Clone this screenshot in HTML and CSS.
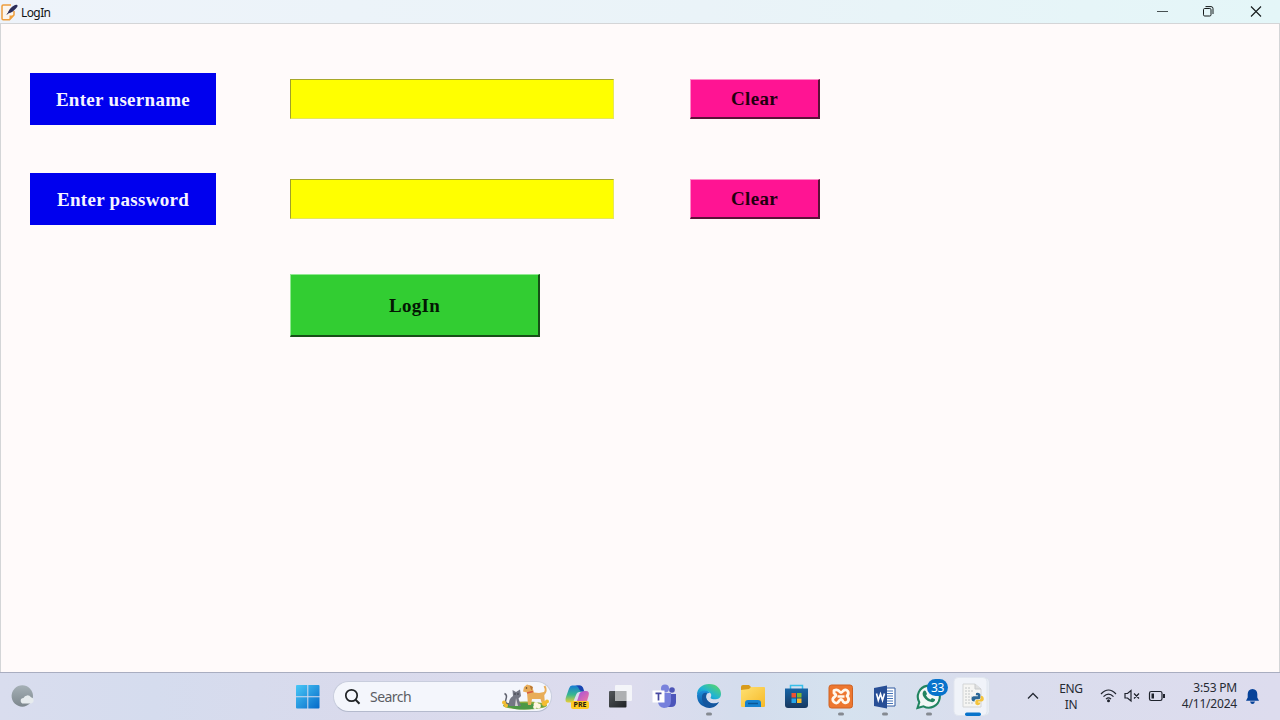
FILE: index.html
```html
<!DOCTYPE html>
<html lang="en">
<head>
<meta charset="utf-8">
<title>LogIn</title>
<link rel="stylesheet" href="styles.css">
</head>
<body>
<div class="desktop">
  <header class="titlebar">
    <svg class="app-icon" width="18" height="20" viewBox="0 0 18 20">
      <path d="M11 4H3.2Q2 4 2 5.200V17.500Q2 18.800 3.200 18.800H9.500L14 14V10" fill="#fbf5ee" stroke="#ee9d3c" stroke-width="1.500"/>
      <path d="M9.500 19V14.500H14Z" fill="#f2a13b"/>
      <path d="M7 13.500L9.500 10" stroke="#30304e" stroke-width="1"/>
      <path d="M8 12.500Q8.500 7.500 15 4Q18.500 3 17.200 6Q13 11.500 8 12.500Z" fill="#2b2d5b"/>
    </svg>
    <span class="title">LogIn</span>
    <svg class="window-controls" width="140" height="23" viewBox="0 0 140 23" fill="none" stroke="#151a1b">
      <path d="M17 11.500H28" stroke="#475052"/>
      <rect x="63.500" y="8.500" width="7.500" height="7.500" rx="1.200"/>
      <path d="M65.500 6.600H71Q73 6.600 73 8.600V14"/>
      <path d="M111 6.500L121 16.500M121 6.500L111 16.500" stroke-width="1.100"/>
    </svg>
  </header>

  <main class="window">
    <form class="login-form">
      <label class="field-label" for="user">Enter username</label>
      <input class="entry" id="user" type="text">
      <button class="button clear" type="button">Clear</button>
      <label class="field-label" for="pass">Enter password</label>
      <input class="entry" id="pass" type="password">
      <button class="button clear" type="button">Clear</button>
      <button class="button submit" type="button">LogIn</button>
    </form>
  </main>

  <footer class="taskbar">
    <svg class="weather" width="44" height="47" viewBox="0 0 44 47">
      <defs>
        <linearGradient id="moon" x2="0" y2="1"><stop stop-color="#a5b0b6"/><stop offset="1" stop-color="#7d878d"/></linearGradient>
      </defs>
      <circle cx="22.300" cy="23" r="10.700" fill="url(#moon)"/>
      <path d="M23.500 30.500a2.800 2.800 0 0 1 0-5.600a4.300 4.300 0 0 1 7.500-.6a3.200 3.200 0 0 1 .5 6.200Z" fill="#e7ecee"/>
    </svg>

    <svg class="start" width="38" height="47" viewBox="0 0 38 47">
      <defs>
        <linearGradient id="win" x2="1" y2="1"><stop stop-color="#49c8f7"/><stop offset="1" stop-color="#0669c8"/></linearGradient>
      </defs>
      <path d="M11 12H21.300V23.200H10V13Q10 12 11 12ZM22.300 12H32.500Q33.500 12 33.500 13V23.200H22.300ZM10 24.200H21.300V35.500H11Q10 35.500 10 34.500ZM22.300 24.200H33.500V34.500Q33.500 35.500 32.500 35.500H22.300Z" fill="url(#win)"/>
    </svg>

    <div class="search">
      <svg width="18" height="18" viewBox="0 0 18 18" fill="none" stroke="#202326" stroke-width="1.700">
        <circle cx="7.500" cy="7.500" r="5.700"/><path d="M11.600 11.800L15.500 15.700" stroke-width="2"/>
      </svg>
      <span class="search-text">Search</span>
      <svg class="pets" width="50" height="29" viewBox="0 0 50 29">
        <ellipse cx="24" cy="23.500" rx="22" ry="4" fill="#8dac3c"/>
        <path d="M3 24Q20 18 43 24Q30 29 14 27Z" fill="#4d9846"/>
        <path d="M9 22Q3 22 5 17Q6.500 13 3.500 11.500" fill="none" stroke="#5e616d" stroke-width="1.500"/>
        <path d="M8 24Q7 17 12 14L11.500 8L15 10L19 7.500L20 14L17.500 16.500L20 24Z" fill="#747784"/>
        <path d="M15 16L17 24H14Z" fill="#d5d1d5"/>
        <circle cx="14" cy="12" r=".7" fill="#292b34"/><circle cx="17" cy="12" r=".7" fill="#292b34"/>
        <path d="M23 5L26 2.500L31 4L33 10.500L38 11L43 10L44 22H41L39.500 17L31 17L30 23H27L26 10.500L22 9.500Z" fill="#e8ad59"/>
        <path d="M42 13Q46.500 9 43.500 4" fill="none" stroke="#e8ad59" stroke-width="2"/>
        <path d="M28.500 3.500L32 5L30.500 8.500Z" fill="#b97735"/><circle cx="25.500" cy="6" r=".8" fill="#483522"/>
        <path d="M26 11L32 9.500" stroke="#d65b43" stroke-width="1.400"/>
        <g fill="#f5bd30"><circle cx="3" cy="20.500" r="2"/><circle cx="5" cy="23.500" r="2"/><circle cx="43.500" cy="21.500" r="2.500"/><circle cx="46" cy="19.500" r="2"/></g>
        <g fill="#fff6df"><circle cx="35" cy="22.500" r="2.400"/><circle cx="37.500" cy="24" r="2.400"/><circle cx="34" cy="25" r="1.900"/></g>
      </svg>
    </div>

    <nav class="apps">
      <div class="app">
        <svg width="44" height="47" viewBox="0 0 44 47">
          <defs>
            <linearGradient id="cpa" x2="0" y2="1"><stop stop-color="#177bd5"/><stop offset=".55" stop-color="#39b88f"/><stop offset="1" stop-color="#edcf32"/></linearGradient>
            <linearGradient id="cpb" x2="1" y2="1"><stop stop-color="#954de8"/><stop offset="1" stop-color="#ff7c91"/></linearGradient>
          </defs>
          <path d="M17 12.500H24Q27 12.500 28 16.500L29 19H24.500Q22 19 21 22L19 27Q18.500 29.500 16 29.500H14Q9 30 11 24L14 15.500Q15 12.500 17 12.500Z" fill="url(#cpa)"/>
          <path d="M29 18H31Q35 18 33.500 23L32 28Q31 32 27 32H19Q21 31 22 28L24 22Q25 18 29 18Z" fill="url(#cpb)"/>
          <path d="M20 12.500H25Q27.500 12.500 28.500 16L29 18Q25 19 24 16Q23 12.500 20 12.500Z" fill="#1945b2"/>
        </svg>
        <span class="pre">PRE</span>
      </div>
      <svg class="app" viewBox="0 0 44 47">
        <defs><linearGradient id="tv" x2="1" y2="1"><stop stop-color="#53575b"/><stop offset="1" stop-color="#1e2124"/></linearGradient></defs>
        <rect x="10" y="18" width="17.500" height="16.500" rx="1" fill="url(#tv)"/>
        <rect x="16" y="12" width="17" height="16" rx="1" fill="#f7f8fa" opacity=".88"/>
        <path d="M16 18H27.500V28H16Z" fill="#aeb0b2"/>
      </svg>
      <svg class="app" viewBox="0 0 44 47">
        <circle cx="22" cy="15.500" r="4" fill="#7982dc"/><circle cx="29" cy="17" r="2.800" fill="#4d55b6"/>
        <path d="M25 21H33V29Q33 34 28 34H25Z" fill="#4c55ba"/>
        <path d="M16 20H28V28Q28 35 21 35Q15 34 15 28Z" fill="#7680dc"/>
        <rect x="9.500" y="17.500" width="12" height="12" fill="#fff"/>
        <path d="M12.500 20.300H18.500M15.500 20.300V27.500" stroke="#4648a1" stroke-width="1.700"/>
      </svg>
      <svg class="app" viewBox="0 0 44 47">
        <defs>
          <linearGradient id="edge" y1="1" x2="1" y2="0"><stop stop-color="#0878c8"/><stop offset=".45" stop-color="#20b3d5"/><stop offset="1" stop-color="#61dc58"/></linearGradient>
          <linearGradient id="edge2" x2="0" y2="1"><stop stop-color="#1c90dc"/><stop offset="1" stop-color="#0c4f9b"/></linearGradient>
        </defs>
        <path d="M10 22C10 15 15.500 11 22 11C30 11 34 16 34 21C34 26 29 27 25 26C22 25 25 24 24 21C22 17 13 17 10 22Z" fill="url(#edge)"/>
        <path d="M10 22C12 17 20 16 23 20C18 19 18 26 22 29C25 31 30 31 32 29C28 36 21 36 16 33C12 31 10 27 10 22Z" fill="url(#edge2)"/>
        <path d="M15 23Q16 19 20 20Q17 25 22 29Q26 32 32 29Q27 36 20 34Q14 30 15 23Z" fill="#14569e"/>
        <rect class="dot" x="19" y="39.500" width="6" height="3" rx="1.500"/>
      </svg>
      <svg class="app" viewBox="0 0 44 47">
        <defs><linearGradient id="folder" x2="1" y2="1"><stop stop-color="#ffe172"/><stop offset="1" stop-color="#f6b928"/></linearGradient></defs>
        <path d="M10 14Q10 12 12 12H18L20 14V17H10Z" fill="#d89b1b"/>
        <path d="M10 17L18 16L20 14H33Q34 14 34 15V33Q34 34 33 34H11Q10 34 10 33Z" fill="url(#folder)"/>
        <path d="M14 34V30Q14 27 17 27H27Q30 27 30 30V34Z" fill="#1682d0"/><path d="M17 30.500H27" stroke="#0a5796" stroke-width="1.500"/>
      </svg>
      <svg class="app" viewBox="0 0 44 47">
        <defs><linearGradient id="store" x2="0" y2="1"><stop stop-color="#1765a7"/><stop offset="1" stop-color="#17385f"/></linearGradient></defs>
        <path d="M15.500 17V12.500H27.500V17" fill="none" stroke="#37bfe9" stroke-width="1.500"/>
        <path d="M10 15.500H33V32Q33 35 30 35H13Q10 35 10 32Z" fill="url(#store)"/>
        <path d="M16.500 20H21V24.500H16.500Z" fill="#f05233"/><path d="M22 20H26.500V24.500H22Z" fill="#7eba32"/><path d="M16.500 25.500H21V30H16.500Z" fill="#26a6e9"/><path d="M22 25.500H26.500V30H22Z" fill="#fcbc27"/>
      </svg>
      <svg class="app" viewBox="0 0 44 47">
        <rect x="10" y="12" width="23.500" height="23" rx="2.500" fill="#ed772f" stroke="#cd6325"/>
        <path d="M15 17.500Q18 16 20 18Q22 21 24 18Q27 15.500 29 18.500Q30 21 28 23Q31 26 28.500 29Q25 31 23.500 27.500Q22 25 20 28Q18 31.500 15 29Q12 26 16 23.500Q18 22 15 20Z" fill="none" stroke="#fff8ec" stroke-width="2.800" stroke-linejoin="round"/>
        <path d="M18.500 23.500H25.500" stroke="#fff8ec" stroke-width="2.500"/>
        <rect class="dot" x="19" y="39.500" width="6" height="3" rx="1.500"/>
      </svg>
      <svg class="app" viewBox="0 0 44 47">
        <path d="M22 15H32V33H22Z" fill="#fff" stroke="#315aa0" stroke-width="1"/>
        <path d="M24 18H30M24 20.500H30M24 23H30M24 25.500H30M24 28H30M24 30.500H30" stroke="#4775b9" stroke-width="1"/>
        <path d="M11 15L24 12.500V35.500L11 33Z" fill="#284f96"/>
        <path d="M13.500 20.500L15.300 27.300L17.500 21L19.500 27.300L21.500 20.500" fill="none" stroke="#fff" stroke-width="1.600"/>
        <rect class="dot" x="19" y="39.500" width="6" height="3" rx="1.500"/>
      </svg>
      <div class="app">
        <svg width="44" height="47" viewBox="0 0 44 47">
          <path d="M10.500 35L12.300 29.200A11 11 0 1 1 16.500 33.300Z" fill="#f2f7f6" stroke="#218460" stroke-width="2.100"/>
          <path d="M16 19Q17.500 16.500 19 18.500L20 21L19 22.500Q20.500 25.300 23.500 26.500L25 25L28 26.300Q28.500 28.500 25.500 29.300Q21.500 29.500 18.300 26Q14.500 22 16 19Z" fill="#218460"/>
          <rect class="dot" x="19" y="39.500" width="6" height="3" rx="1.500"/>
        </svg>
        <span class="badge">33</span>
      </div>
      <svg class="app" viewBox="0 0 44 47">
        <rect x="6" y="5" width="32.500" height="37.500" rx="4" fill="#e7ecf5" stroke="#d9dfe9"/>
        <rect x="3" y="4.500" width="33" height="38" rx="4" fill="#f0f3f9" stroke="#e1e6ef"/>
        <path d="M12 11H24L30 16V34H12Z" fill="#f5f5f3" stroke="#d3d5d6"/>
        <path d="M24 11V16H30" fill="#dedfdf" stroke="#c9cbcc"/>
        <path d="M14 15H19M14 18H22M14 21H20M14 24H21M14 27H19M14 30H22" stroke="#c2c6c7" stroke-dasharray="2 1"/>
        <g transform="translate(5 2.500) scale(.84 .9)">
          <path d="M24 19.500Q28 18.500 29 21V25Q28.500 26.500 26.500 26.500H23.500Q22 27 22 29Q18 29 18.500 25Q19 23 21 23H26V22H23.500Z" fill="#2c6796"/>
          <path d="M29.500 22.500Q33.500 22.500 33 27Q32.500 29 30.500 29H26.500V30H29Q29 33 25.500 33Q22.500 32.500 23 30V28.500Q23.500 27 25.500 27H28Q29.500 26.500 29.500 25Z" fill="#f4c43d"/>
        </g>
        <rect x="14" y="39.500" width="16" height="3.500" rx="1.700" fill="#0873cb"/>
      </svg>
    </nav>

    <div class="tray">
      <svg class="chevron" width="14" height="10" viewBox="0 0 14 10" fill="none" stroke="#252a34" stroke-width="1.300"><path d="M2 6.500L7 1.500L12 6.500"/></svg>
      <div class="language"><span>ENG</span><span>IN</span></div>
      <svg class="status" width="70" height="18" viewBox="0 0 70 18" fill="none" stroke="#1e222c" stroke-width="1.200">
        <path d="M1 6Q8.500-2 16 6M3.500 8.700Q8.500 3.500 13.500 8.700M6 11.200Q8.500 8.700 11 11.200"/>
        <circle cx="8.500" cy="12.700" r="1.500" fill="#1e222c" stroke="none"/>
        <path d="M25 5.500H27.500L31 2.500V13L27.500 10H25ZM34 5.500L39 10.500M39 5.500L34 10.500"/>
        <rect x="49.500" y="3.500" width="12.500" height="9" rx="1.700"/><path d="M51.500 5.500H54V10.500H51.500Z" fill="#1e222c" stroke="none"/><path d="M64 6V10" stroke-width="2"/>
      </svg>
      <div class="clock"><span class="time">3:53 PM</span><span>4/11/2024</span></div>
      <svg class="bell" width="15" height="17" viewBox="0 0 15 17" fill="#064299"><path d="M7.500 1Q12.200 1.300 12.300 6V9.500L14 12.800H1L2.700 9.500V6Q2.800 1.300 7.500 1ZM5 13.500H10Q9.300 16 7.500 16T5 13.500Z"/></svg>
    </div>
  </footer>
</div>
</body>
</html>
```

FILE: styles.css
```css
* { box-sizing: border-box; }
body { margin: 0; overflow: hidden; }
svg { display: block; flex: none; }

.desktop {
  width: 1280px;
  height: 720px;
  display: flex;
  flex-direction: column;
  font-family: "Noto Sans", "Open Sans", sans-serif;
}

.titlebar {
  height: 23px;
  display: flex;
  align-items: center;
  background: linear-gradient(90deg, #eef3fa, #eaf3f8 55%, #e4f6f8);
  color: #101214;
  font-size: 12px;
}
.app-icon { margin-top: -2px; }
.title { margin-left: 3px; line-height: 23px; padding-top: 1px; letter-spacing: -.6px; }
.window-controls { margin-left: auto; }

.window {
  height: 649px;
  padding: 49px 0 0 29px;
  background: #fffafa;
  border: 1px solid #d4d5d7;
  border-bottom: 0;
}
.login-form {
  display: grid;
  grid-template-columns: 260px 400px 130px;
  grid-template-rows: 52px 52px 63px;
  row-gap: 48px;
  align-items: start;
  font-family: "Liberation Serif", "Times New Roman", serif;
  font-weight: bold;
  font-size: 19px;
}
.field-label {
  width: 186px;
  height: 52px;
  padding-top: 1px;
  line-height: 52px;
  background: #0000ee;
  color: #f5f4ff;
  text-align: center;
  letter-spacing: .3px;
}
.entry {
  width: 324px;
  height: 40px;
  padding: 0 8px;
  margin: 6px 0 0;
  background: #ffff00;
  border: 1px solid;
  border-color: #a8a828 #e6e65e #e6e65e #a0a02a;
  border-radius: 0;
  outline: 0;
  font: inherit;
}
.button {
  border-style: solid;
  border-width: 1px 2px 2px 1px;
  border-radius: 0;
  padding: 0;
  font: inherit;
  letter-spacing: .3px;
  color: #000;
}
.clear {
  width: 130px;
  height: 40px;
  margin: 6px 0 0;
  background: #ff1493;
  border-color: #ff8cca #5c1038 #5c1038 #ff8cca;
  color: #21000f;
}
.submit {
  grid-column: 2;
  width: 250px;
  height: 63px;
  margin: 1px 0 0;
  padding-top: 2px;
  background: #32cd32;
  border-color: #91e991 #174f17 #174f17 #91e991;
  color: #031703;
}

.taskbar {
  height: 48px;
  display: flex;
  align-items: center;
  border-top: 1px solid #a9adc0;
  background: linear-gradient(90deg, #d9ddee 0, #d5dcee 12%, #d9daec 28%, #dddcee 49%, #d4dded 58%, #d5e2ef 66%, #dadded 77%, #dddcee 100%);
}
.start { margin-left: 242px; }
.search {
  width: 219px;
  height: 31px;
  margin-left: 9px;
  padding-left: 10px;
  display: flex;
  align-items: center;
  border: 1px solid #c8cddd;
  border-bottom-color: #b4bacd;
  border-radius: 16px;
  background: #f4f6fc;
}
.search-text { margin-left: 8px; margin-top: -1px; color: #5b5d63; font-size: 14px; letter-spacing: -.55px; }
.pets { margin-left: auto; }
.apps { display: flex; margin-left: 3px; }
.app { position: relative; width: 44px; height: 47px; }
.dot { fill: #858a91; }
.pre {
  position: absolute;
  left: 16px;
  top: 28px;
  width: 18px;
  height: 8px;
  border-radius: 2px;
  background: #ffcb22;
  color: #27200d;
  font-size: 7px;
  font-weight: bold;
  line-height: 8px;
  text-align: center;
}
.badge {
  position: absolute;
  left: 20px;
  top: 6px;
  width: 21px;
  height: 17px;
  border-radius: 9px;
  background: #0873cb;
  color: #fff;
  font-size: 12px;
  letter-spacing: -.3px;
  line-height: 17px;
  text-align: center;
}
.tray { display: flex; align-items: center; margin-left: 31px; color: #262a33; font-size: 12px; line-height: 16px; }
.language { width: 32px; margin-left: 15px; display: flex; flex-direction: column; align-items: center; letter-spacing: -.3px; }
.status { margin-left: 13px; }
.clock { width: 67px; margin-top: -2px; display: flex; flex-direction: column; align-items: flex-end; letter-spacing: -.2px; }
.bell { margin-left: 8px; }
```
